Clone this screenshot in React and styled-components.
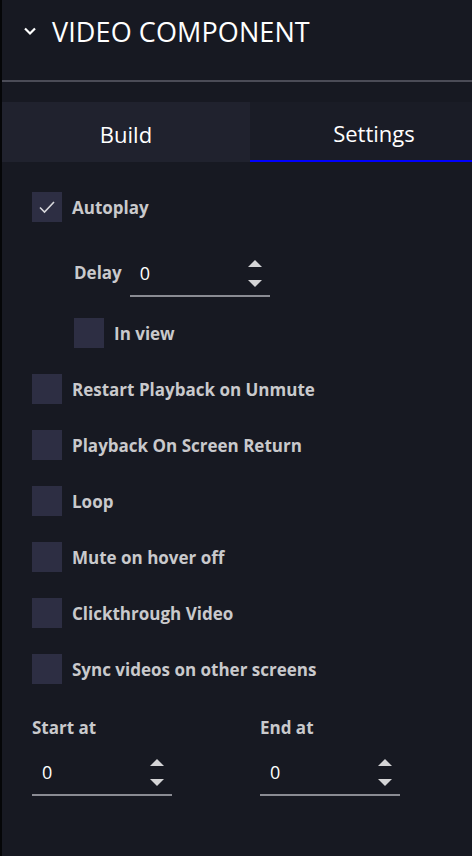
import React, { useState } from "react";
import styled, { createGlobalStyle } from "styled-components";

const GlobalStyle = createGlobalStyle`
  html, body {
    margin: 0;
    padding: 0;
    background: #171922;
  }
  body {
    font-family: "Open Sans", "Noto Sans", sans-serif;
  }
`;

const Panel = styled.div`
  width: 472px;
  min-height: 856px;
  box-sizing: border-box;
  overflow: hidden;
  background: #171922;
  border-left: 2px solid #050608;
  color: #ffffff;
`;

const Header = styled.div`
  display: flex;
  align-items: center;
  height: 82px;
  padding: 0 0 18px 20px;
  box-sizing: border-box;
  border-bottom: 2px solid #4b4c57;
`;

const Chevron = styled.svg`
  width: 16px;
  height: 12px;
  margin-right: 14px;
`;

const Title = styled.h1`
  margin: 0;
  font-size: 27px;
  font-weight: 400;
  letter-spacing: 0.1px;
  color: #ffffff;
`;

const Tabs = styled.div`
  display: grid;
  grid-template-columns: 248px 248px;
  margin-top: 20px;
  height: 60px;
`;

const Tab = styled.button`
  border: none;
  margin: 0;
  padding: 3px 0 0;
  font-family: inherit;
  font-size: 22px;
  color: #ffffff;
  background: ${(p) => (p.$active ? "#1a1c26" : "#20222e")};
  border-bottom: ${(p) => (p.$active ? "2px solid #0000ff" : "none")};
  cursor: pointer;
`;

const Body = styled.div`
  display: flex;
  flex-direction: column;
  padding: 30px 0 0 30px;
`;

const CheckRow = styled.label`
  display: flex;
  align-items: center;
  gap: 10px;
  height: 30px;
  margin-bottom: 26px;
  margin-left: ${(p) => p.$indent || 0}px;
  cursor: pointer;
`;

const Box = styled.span`
  width: 30px;
  height: 30px;
  flex: none;
  background: #2d2e43;
  display: flex;
  align-items: center;
  justify-content: center;
`;

const Label = styled.span`
  font-size: 17px;
  font-weight: 700;
  color: #c9c9cc;
`;

const DelayRow = styled.div`
  display: flex;
  align-items: flex-start;
  gap: 8px;
  margin: 11px 0 21px 42px;
`;

const DelayLabel = styled(Label)`
  margin-top: 2px;
`;

const NumberField = styled.div`
  width: 140px;
  height: 38px;
  box-sizing: border-box;
  border-bottom: 2px solid #8a8b93;
  display: flex;
  align-items: center;
  padding: 0 10px 8px;
`;

const Value = styled.span`
  flex: 1;
  font-size: 18px;
  color: #ffffff;
`;

const Spinner = styled.div`
  display: flex;
  flex-direction: column;
  gap: 13px;
  margin-right: -2px;
`;

const Arrow = styled.span`
  width: 0;
  height: 0;
  border-left: 7px solid transparent;
  border-right: 7px solid transparent;
  ${(p) =>
    p.$up
      ? "border-bottom: 7px solid #d4d4d6;"
      : "border-top: 7px solid #d4d4d6;"}
`;

const RangeRow = styled.div`
  display: grid;
  grid-template-columns: 228px 140px;
  margin-top: 6px;
`;

const RangeCol = styled.div`
  display: flex;
  flex-direction: column;
  gap: 19px;
`;

const Check = () => (
  <svg width="18" height="14" viewBox="0 0 18 14">
    <path d="M2 7.5 L6.5 12 L16 2" fill="none" stroke="#d8d8dc" strokeWidth="1.6" />
  </svg>
);

const NumberInput = ({ value }) => (
  <NumberField>
    <Value>{value}</Value>
    <Spinner>
      <Arrow $up />
      <Arrow />
    </Spinner>
  </NumberField>
);

const options = [
  "Restart Playback on Unmute",
  "Playback On Screen Return",
  "Loop",
  "Mute on hover off",
  "Clickthrough Video",
  "Sync videos on other screens",
];

export default function App() {
  const [tab, setTab] = useState("settings");

  return (
    <>
      <GlobalStyle />
      <Panel>
        <Header>
          <Chevron viewBox="0 0 16 12">
            <path d="M3 3.5 L8 8.5 L13 3.5" fill="none" stroke="#ffffff" strokeWidth="2.2" />
          </Chevron>
          <Title>VIDEO COMPONENT</Title>
        </Header>
        <Tabs>
          <Tab $active={tab === "build"} onClick={() => setTab("build")}>
            Build
          </Tab>
          <Tab $active={tab === "settings"} onClick={() => setTab("settings")}>
            Settings
          </Tab>
        </Tabs>
        <Body>
          <CheckRow>
            <Box>
              <Check />
            </Box>
            <Label>Autoplay</Label>
          </CheckRow>
          <DelayRow>
            <DelayLabel>Delay</DelayLabel>
            <NumberInput value="0" />
          </DelayRow>
          <CheckRow $indent={42}>
            <Box />
            <Label>In view</Label>
          </CheckRow>
          {options.map((o) => (
            <CheckRow key={o}>
              <Box />
              <Label>{o}</Label>
            </CheckRow>
          ))}
          <RangeRow>
            <RangeCol>
              <Label>Start at</Label>
              <NumberInput value="0" />
            </RangeCol>
            <RangeCol>
              <Label>End at</Label>
              <NumberInput value="0" />
            </RangeCol>
          </RangeRow>
        </Body>
      </Panel>
    </>
  );
}
